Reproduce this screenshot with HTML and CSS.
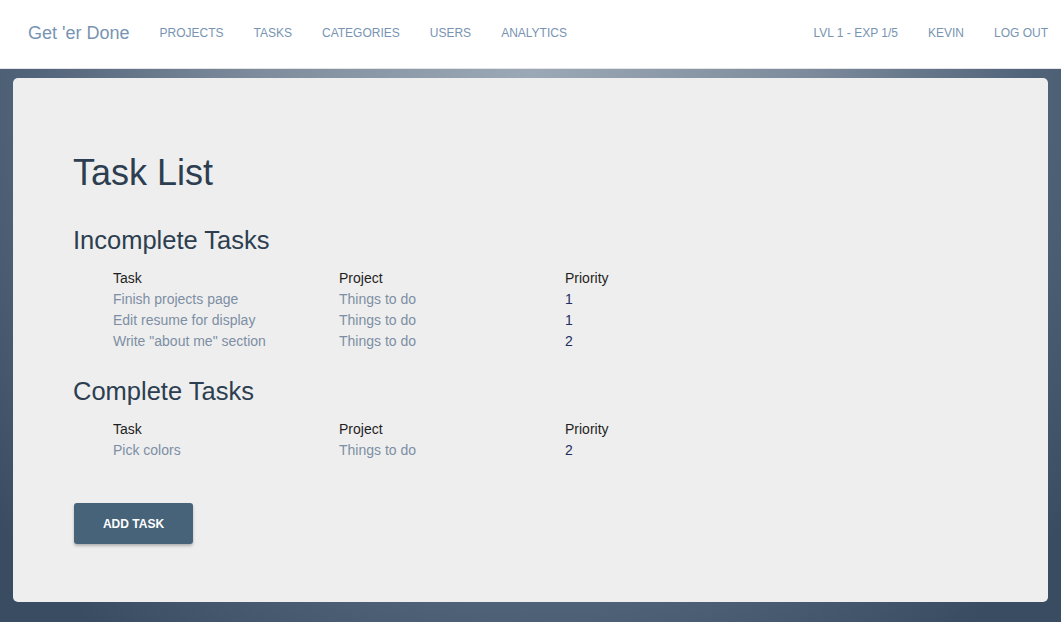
FILE: index.html
```html
<!DOCTYPE html>
<html>
<head>
<meta charset="utf-8">
<link rel="stylesheet" href="styles.css">
</head>
<body>
<nav class="navbar">
  <div class="nav-left">
    <a class="brand" href="#">Get 'er Done</a>
    <a class="nav-link" href="#">PROJECTS</a>
    <a class="nav-link" href="#">TASKS</a>
    <a class="nav-link" href="#">CATEGORIES</a>
    <a class="nav-link" href="#">USERS</a>
    <a class="nav-link" href="#">ANALYTICS</a>
  </div>
  <div class="nav-right">
    <a class="nav-link" href="#">LVL 1 - EXP 1/5</a>
    <a class="nav-link" href="#">KEVIN</a>
    <a class="nav-link" href="#">LOG OUT</a>
  </div>
</nav>
<main class="stage">
  <section class="card">
    <h1 class="title">Task List</h1>
    <h2 class="section-title">Incomplete Tasks</h2>
    <table class="tasks">
      <thead>
        <tr><th>Task</th><th>Project</th><th>Priority</th></tr>
      </thead>
      <tbody>
        <tr><td><a href="#">Finish projects page</a></td><td><a href="#">Things to do</a></td><td class="prio">1</td></tr>
        <tr><td><a href="#">Edit resume for display</a></td><td><a href="#">Things to do</a></td><td class="prio">1</td></tr>
        <tr><td><a href="#">Write "about me" section</a></td><td><a href="#">Things to do</a></td><td class="prio">2</td></tr>
      </tbody>
    </table>
    <h2 class="section-title">Complete Tasks</h2>
    <table class="tasks">
      <thead>
        <tr><th>Task</th><th>Project</th><th>Priority</th></tr>
      </thead>
      <tbody>
        <tr><td><a href="#">Pick colors</a></td><td><a href="#">Things to do</a></td><td class="prio">2</td></tr>
      </tbody>
    </table>
    <button class="btn">ADD TASK</button>
  </section>
</main>
</body>
</html>
```
FILE: styles.css
```css
* { box-sizing: border-box; }
html, body { margin: 0; padding: 0; height: 100%; }
body {
  font-family: "Liberation Sans", Arial, sans-serif;
  color: #2c3e50;
  display: flex;
  flex-direction: column;
  overflow: hidden;
}
a { text-decoration: none; }
.navbar {
  height: 69px;
  background: #fff;
  border-bottom: 1px solid #e2e4e7;
  display: flex;
  align-items: center;
  justify-content: space-between;
  padding: 0 13px 2px 28px;
  flex-shrink: 0;
}
.nav-left, .nav-right { display: flex; align-items: center; }
.brand {
  font-size: 18px;
  color: #7894b2;
  margin-right: 30px;
}
.nav-link {
  font-size: 12px;
  color: #7894b2;
  margin-right: 30px;
}
.nav-left .nav-link:last-child { margin-right: 0; }
.nav-right .nav-link:last-child { margin-right: 0; }
.stage {
  flex: 1;
  padding: 9px 13px 20px 13px;
  background: radial-gradient(ellipse 65% 130% at 50% 0%, #9ca8b5 0%, #7d8b9c 40%, #52647a 72%, #3a4c62 100%);
}
.card {
  height: 524px;
  background: #eeeeee;
  border-radius: 5px;
  padding: 73px 60px 0 60px;
}
.title {
  font-size: 36px;
  font-weight: normal;
  margin: 0 0 27px 0;
  color: #2c3e50;
  line-height: 44px;
}
.section-title {
  font-size: 25.5px;
  font-weight: normal;
  margin: 0 0 10px 0;
  line-height: 36px;
  color: #2c3e50;
}
.tasks {
  border-collapse: collapse;
  margin: 0 0 21px 40px;
  font-size: 14px;
}
.tasks th, .tasks td {
  width: 226px;
  text-align: left;
  padding: 0;
  height: 21px;
  line-height: 21px;
  font-weight: normal;
}
.tasks th { color: #1e1e1e; }
.tasks td a { color: #7d8ea4; }
.tasks td.prio { color: #1d2f63; }
.btn {
  margin: 21px 0 0 1px;
  width: 119px;
  height: 41px;
  background: #46637a;
  color: #fff;
  border: none;
  border-radius: 3px;
  font-family: "Liberation Sans", Arial, sans-serif;
  font-size: 12px;
  font-weight: bold;
  box-shadow: 0 2px 3px rgba(0,0,0,0.25);
}
```
